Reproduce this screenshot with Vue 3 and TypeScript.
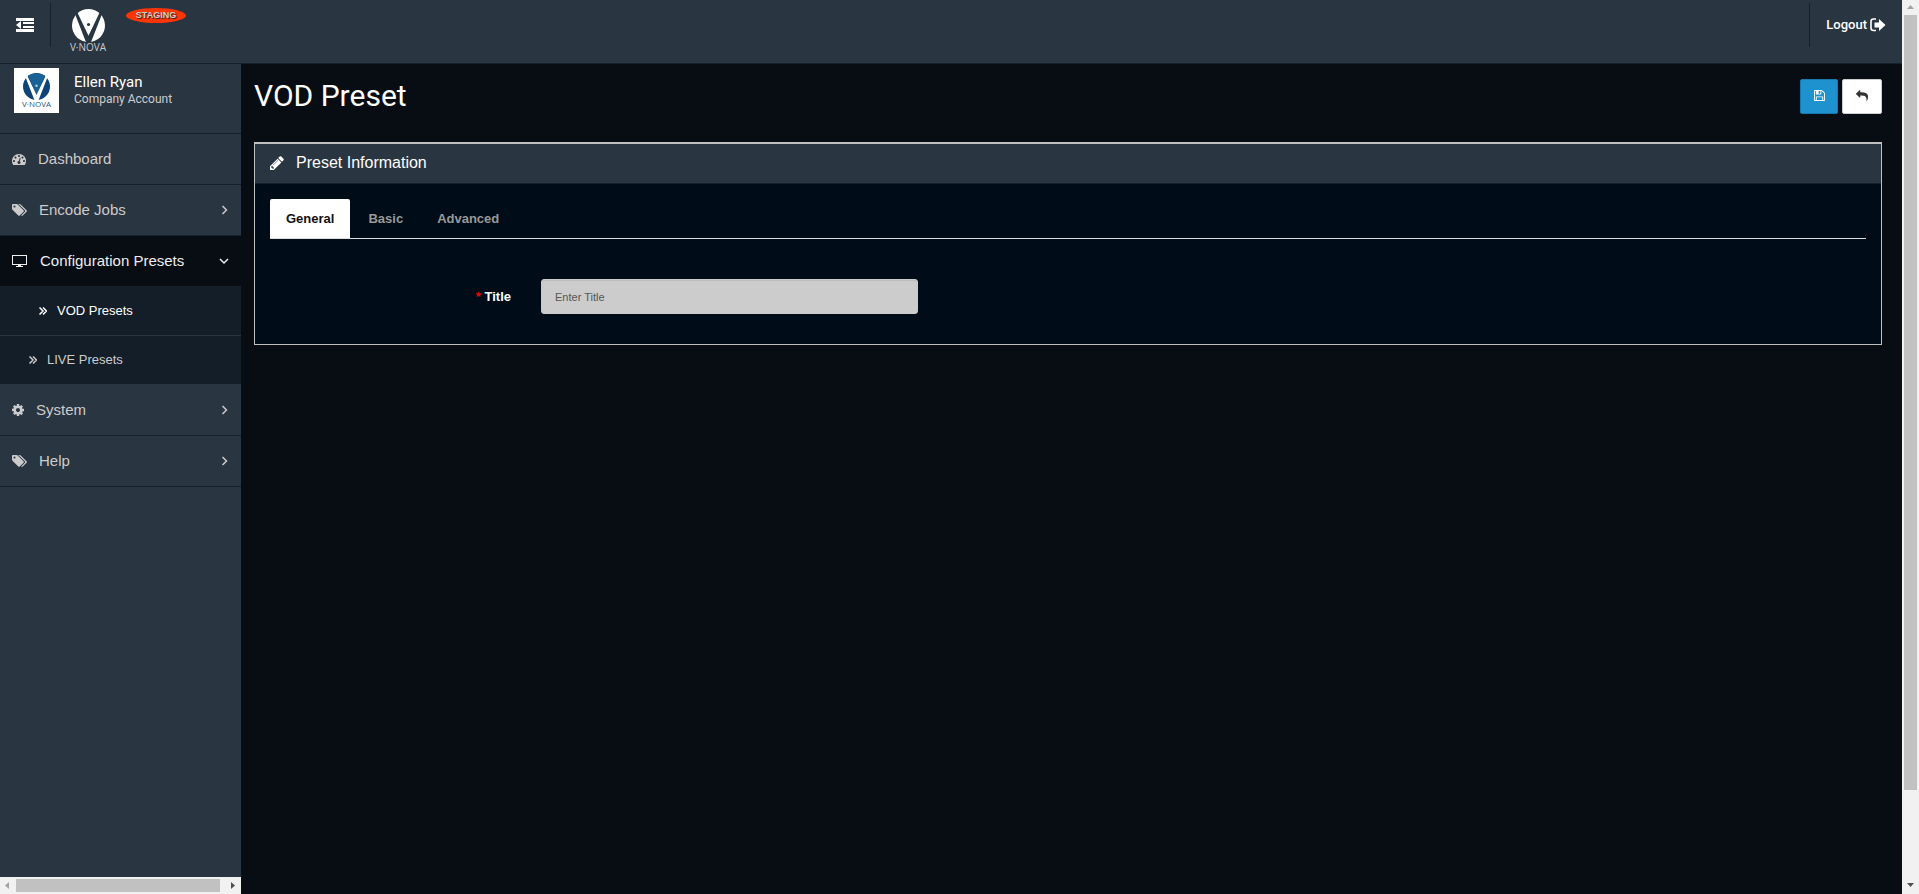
<script setup lang="ts">
import { ref } from 'vue'

interface MenuItem {
  label: string
  icon: 'tachometer' | 'tags' | 'desktop' | 'cog'
  arrow?: 'right' | 'down'
  children?: { label: string; active: boolean }[]
}

const icons: Record<string, { box: string; d: string }> = {
  tachometer: {
    box: '0 0 1792 1792',
    d: 'M384 1152q0-53-37.5-90.5t-90.5-37.5-90.5 37.5-37.5 90.5 37.5 90.5 90.5 37.5 90.5-37.5 37.5-90.5zm192-448q0-53-37.5-90.5t-90.5-37.5-90.5 37.5-37.5 90.5 37.5 90.5 90.5 37.5 90.5-37.5 37.5-90.5zm428 481l101-382q6-26-7.5-48.5t-38.5-29.5-48 6.5-30 39.5l-101 382q-60 5-107 43.5t-63 98.5q-20 77 20 146t117 89 146-20 89-117q16-60-6-117t-72-91zm660-33q0-53-37.5-90.5t-90.5-37.5-90.5 37.5-37.5 90.5 37.5 90.5 90.5 37.5 90.5-37.5 37.5-90.5zm-640-640q0-53-37.5-90.5t-90.5-37.5-90.5 37.5-37.5 90.5 37.5 90.5 90.5 37.5 90.5-37.5 37.5-90.5zm448 192q0-53-37.5-90.5t-90.5-37.5-90.5 37.5-37.5 90.5 37.5 90.5 90.5 37.5 90.5-37.5 37.5-90.5zm320 448q0 261-141 483-19 29-54 29h-1402q-35 0-54-29-141-221-141-483 0-182 71-348t191-286 286-191 348-71 348 71 286 191 191 286 71 348z',
  },
  tags: {
    box: '0 0 1920 1792',
    d: 'M448 448q0-53-37.5-90.5t-90.5-37.5-90.5 37.5-37.5 90.5 37.5 90.5 90.5 37.5 90.5-37.5 37.5-90.5zm1067 576q0 53-37 90l-491 492q-39 37-91 37-53 0-90-37l-715-716q-38-37-64.5-101t-26.5-117v-416q0-52 38-90t90-38h416q53 0 117 26.5t102 64.5l715 714q37 39 37 91zm384 0q0 53-37 90l-491 492q-39 37-91 37-36 0-59-14t-53-45l470-470q37-37 37-90 0-52-37-91l-715-714q-38-38-102-64.5t-117-26.5h224q53 0 117 26.5t102 64.5l715 714q37 39 37 91z',
  },
  desktop: {
    box: '0 0 15 14',
    d: 'M0 1h15v10H9v1h2v1H4v-1h2v-1H0zM1 2v8h13V2z',
  },
  cog: {
    box: '128 0 1536 1792',
    d: 'M1152 896q0-106-75-181t-181-75-181 75-75 181 75 181 181 75 181-75 75-181zm512-109v222q0 12-8 23t-20 13l-185 28q-19 54-39 91 35 50 107 138 10 12 10 25t-9 23q-27 37-99 108t-94 71q-12 0-26-9l-138-108q-44 23-91 38-16 136-29 186-7 28-36 28h-222q-14 0-24.5-8.5t-11.5-21.5l-28-184q-49-16-90-37l-141 107q-10 9-25 9-14 0-25-11-126-114-165-168-7-10-7-23 0-12 8-23 15-21 51-66.5t54-70.5q-27-50-41-99l-183-27q-13-2-21-12.5t-8-23.5v-222q0-12 8-23t19-13l186-28q14-46 39-92-40-57-107-138-10-12-10-24 0-10 9-23 26-36 98.5-107.5t94.5-71.5q13 0 26 10l138 107q44-23 91-38 16-136 29-186 7-28 36-28h222q14 0 24.5 8.5t11.5 21.5l28 184q49 16 90 37l142-107q9-9 24-9 13 0 25 10 129 119 165 170 7 8 7 22 0 12-8 23-15 21-51 66.5t-54 70.5q26 50 41 98l183 28q13 2 21 12.5t8 23.5z',
  },
}

const menu: MenuItem[] = [
  { label: 'Dashboard', icon: 'tachometer' },
  { label: 'Encode Jobs', icon: 'tags', arrow: 'right' },
  {
    label: 'Configuration Presets',
    icon: 'desktop',
    arrow: 'down',
    children: [
      { label: 'VOD Presets', active: true },
      { label: 'LIVE Presets', active: false },
    ],
  },
  { label: 'System', icon: 'cog', arrow: 'right' },
  { label: 'Help', icon: 'tags', arrow: 'right' },
]

const tabs = ['General', 'Basic', 'Advanced']
const activeTab = ref('General')
const title = ref('')
</script>

<template>
  <div class="window">
    <div class="page">
      <header class="topbar">
        <button class="toggle" type="button" aria-label="Toggle menu">
          <svg width="18" height="14" viewBox="0 0 18 14" fill="#fff">
            <path d="M0 0h18v3H0zM7 4h11v2H7zM7 8h11v2H7zM0 11h18v3H0zM5 3v8L0 7z" />
          </svg>
        </button>
        <a class="brand" href="#" aria-label="V-Nova home">
          <svg width="33" height="33" viewBox="0 0 32 32">
            <circle cx="16" cy="16" r="16" fill="#fff" />
            <path d="M3 5L13.500 32h5L29 5l-2-2L16 26 5 3z" fill="#2a3542" />
            <circle cx="16" cy="15" r="1.500" fill="#2a3542" />
          </svg>
          <span class="brand-name">V·NOVA</span>
        </a>
        <span class="badge">STAGING</span>
        <a class="logout" href="#">
          Logout
          <svg width="16" height="14" viewBox="0 0 16 14">
            <path d="M6 1H3.500Q1 1 1 3.500v6.500Q1 12.500 3.500 12.500H6" fill="none" stroke="#fff" stroke-width="1.600" />
            <path d="M4.500 4.500H9V1l6.500 6L9 13V9.500H4.500z" fill="#fff" />
          </svg>
        </a>
      </header>

      <div class="columns">
        <aside class="sidebar">
          <div class="user">
            <div class="avatar">
              <svg width="27" height="27" viewBox="0 0 32 32">
                <circle cx="16" cy="16" r="16" fill="#0e4377" />
                <path d="M6 3l10 23L26 3q-10-5-20 0z" fill="#1a6196" />
                <path d="M3 5L13.500 32h5L29 5l-2-2L16 26 5 3z" fill="#fff" />
                <circle cx="16" cy="15" r="1.500" fill="#9fd0e8" />
              </svg>
              <span class="avatar-name">V·NOVA</span>
            </div>
            <div class="who">
              <span class="name">Ellen Ryan</span>
              <span class="role">Company Account</span>
            </div>
          </div>
          <nav>
            <ul class="menu">
              <li v-for="item in menu" :key="item.label">
                <a href="#" class="entry" :class="{ open: item.children }">
                  <svg class="glyph" :class="item.icon" :viewBox="icons[item.icon].box">
                    <path :d="icons[item.icon].d" fill="currentColor" fill-rule="evenodd" />
                  </svg>
                  <span>{{ item.label }}</span>
                  <svg v-if="item.arrow" class="arrow" width="10" height="10" viewBox="0 0 10 10">
                    <path
                      :d="item.arrow === 'right' ? 'M3.500 1l4 4-4 4' : 'M1 3l4 4 4-4'"
                      fill="none"
                      stroke="currentColor"
                      stroke-width="1.500"
                    />
                  </svg>
                </a>
                <ul v-if="item.children" class="submenu">
                  <li v-for="child in item.children" :key="child.label">
                    <a href="#" class="sub" :class="{ active: child.active }">
                      <svg width="8" height="8" viewBox="0 0 8 8">
                        <path d="M.5.5L4 4 .5 7.500M4 .5L7.500 4 4 7.500" fill="none" stroke="currentColor" stroke-width="1.500" />
                      </svg>
                      <span>{{ child.label }}</span>
                    </a>
                  </li>
                </ul>
              </li>
            </ul>
          </nav>
          <div class="hbar" aria-hidden="true">
            <svg width="16" height="17" viewBox="0 0 16 17"><path d="M9 5v7L5 8.500z" fill="#a3a3a3" /></svg>
            <div class="hthumb"></div>
            <svg width="21" height="17" viewBox="0 0 21 17"><path d="M11 5v7l4-3.500z" fill="#505050" /></svg>
          </div>
        </aside>

        <main class="content">
          <div class="heading">
            <h1>VOD Preset</h1>
            <div class="actions">
              <button class="save" type="button" aria-label="Save">
                <svg width="11" height="11" viewBox="128 128 1536 1536">
                  <path
                    fill="#fff"
                    d="M512 1536h768v-384h-768v384zm896 0h128v-896q0-14-10-38.5t-20-34.5l-281-281q-10-10-34-20t-39-10v416q0 40-28 68t-68 28h-576q-40 0-68-28t-28-68v-416h-128v1280h128v-416q0-40 28-68t68-28h832q40 0 68 28t28 68v416zm-384-928v-320q0-13-9.5-22.5t-22.5-9.5h-192q-13 0-22.5 9.5t-9.5 22.5v320q0 13 9.5 22.5t22.5 9.5h192q13 0 22.5-9.5t9.5-22.5zm640 32v928q0 40-28 68t-68 28h-1344q-40 0-68-28t-28-68v-1344q0-40 28-68t68-28h928q40 0 88 20t76 48l280 280q28 28 48 76t20 88z"
                  />
                </svg>
              </button>
              <button class="back" type="button" aria-label="Back">
                <svg width="12" height="12" viewBox="0 0 1792 1792">
                  <path
                    fill="#333"
                    d="M1792 1120q0 166-127 451-3 7-10.5 24t-13.5 30-13 22q-12 17-28 17-15 0-23.5-10t-8.5-25q0-9 2.5-26.5t2.5-23.5q5-68 5-123 0-112-19.5-200.5t-54-153.5-89-112-113-80-133-46-145.5-21.5-158.5-7.5h-224v256q0 26-19 45t-45 19-45-19l-512-512q-19-19-19-45t19-45l512-512q19-19 45-19t45 19 19 45v256h224q713 0 875 403 53 134 53 333z"
                  />
                </svg>
              </button>
            </div>
          </div>

          <section class="panel">
            <h2 class="panel-head">
              <svg width="14" height="14" viewBox="128 128 1536 1536">
                <path
                  fill="#fff"
                  d="M491 1536l91-91-235-235-91 91v107h128v128h107zm523-928q0-22-22-22-10 0-17 7l-542 542q-7 7-7 17 0 22 22 22 10 0 17-7l542-542q7-7 7-17zm-54-192l416 416-832 832h-416v-416zm683 96q0 53-37 90l-166 166-416-416 166-165q36-38 90-38 53 0 91 38l235 234q37 39 37 91z"
                />
              </svg>
              Preset Information
            </h2>
            <div class="tabs" role="tablist">
              <button
                v-for="tab in tabs"
                :key="tab"
                type="button"
                role="tab"
                class="tab"
                :class="{ active: tab === activeTab }"
                :aria-selected="tab === activeTab"
                @click="activeTab = tab"
              >
                {{ tab }}
              </button>
            </div>
            <form class="fields" @submit.prevent>
              <label for="preset-title"><span class="required">*</span> Title</label>
              <div class="control">
                <input id="preset-title" v-model="title" type="text" placeholder="Enter Title" />
              </div>
            </form>
          </section>
        </main>
      </div>
    </div>
    <div class="vbar" aria-hidden="true">
      <svg width="17" height="15" viewBox="0 0 17 15"><path d="M5 9h7L8.500 5z" fill="#a3a3a3" /></svg>
      <div class="vthumb"></div>
      <svg width="17" height="17" viewBox="0 0 17 17"><path d="M5 6h7l-3.500 4z" fill="#505050" /></svg>
    </div>
  </div>
</template>

<style>
body {
  margin: 0;
  background: #080c13;
}
</style>

<style scoped>
* {
  box-sizing: border-box;
}
.window {
  display: flex;
  height: 100vh;
  font: 13px/18px 'Liberation Sans', Arial, sans-serif;
  color: #fff;
}
a {
  color: inherit;
  text-decoration: none;
}
button {
  font: inherit;
  padding: 0;
  border: 0;
  cursor: pointer;
}
svg {
  display: block;
  flex: none;
}
ul {
  list-style: none;
  margin: 0;
  padding: 0;
}
.page {
  flex: 1;
  min-width: 0;
  display: flex;
  flex-direction: column;
}
.topbar {
  display: flex;
  align-items: flex-start;
  height: 64px;
  background: #2a3542;
  border-bottom: 1px solid #17212c;
}
.toggle {
  display: flex;
  align-items: center;
  justify-content: center;
  width: 51px;
  height: 44px;
  margin-top: 3px;
  padding-right: 1px;
  background: none;
  border-right: 1px solid #17212c;
}
.brand {
  display: flex;
  flex-direction: column;
  align-items: center;
  width: 38px;
  margin: 9px 0 0 18px;
}
.brand-name {
  font: 10px/10px 'Open Sans', sans-serif;
  color: #c8ccd0;
}
.badge {
  margin: 8px 0 0 19px;
  width: 60px;
  border-radius: 50%;
  background: #ff3503;
  color: #ccc;
  font-size: 9px;
  font-weight: bold;
  line-height: 15px;
  text-align: center;
  text-shadow: 1px 1px 1px #222;
}
.logout {
  display: flex;
  align-items: center;
  gap: 3px;
  height: 44px;
  margin: 3px 0 0 auto;
  padding: 0 16px;
  border-left: 1px solid #17212c;
  font-family: Roboto, sans-serif;
  font-weight: 500;
}
.columns {
  flex: 1;
  min-height: 0;
  display: flex;
}
.sidebar {
  width: 241px;
  flex: none;
  display: flex;
  flex-direction: column;
  background: #2a3542;
}
.user {
  display: flex;
  gap: 15px;
  height: 69px;
  padding: 4px 14px 0;
}
.avatar {
  display: flex;
  flex-direction: column;
  align-items: center;
  width: 45px;
  height: 45px;
  padding-top: 5px;
  background: #fff;
}
.avatar-name {
  font: 8px/8px 'Open Sans', sans-serif;
  color: #2f5680;
}
.who {
  display: flex;
  flex-direction: column;
  padding-top: 5px;
  font-family: Roboto, sans-serif;
}
.name {
  font-size: 15px;
  line-height: 18px;
}
.role {
  font-size: 12px;
  line-height: 16px;
  color: #ccc;
}
.menu {
  border-top: 1px solid #17212c;
}
.entry {
  display: flex;
  align-items: center;
  gap: 12px;
  height: 51px;
  padding: 0 12px;
  border-bottom: 1px solid #17212c;
  font-size: 15px;
  color: #ccc;
}
.entry.open {
  gap: 13px;
  background: #080c13;
  color: #eee;
}
.glyph {
  width: 15px;
  height: 14px;
}
.glyph.tachometer {
  width: 14px;
}
.glyph.cog {
  width: 12px;
}
.arrow {
  margin-left: auto;
}
.submenu {
  background: #131e29;
}
.submenu li {
  border-bottom: 1px solid #2a3542;
}
.sub {
  display: flex;
  align-items: center;
  gap: 10px;
  height: 48px;
  padding-left: 29px;
  color: #ccc;
}
.sub.active {
  padding-left: 39px;
  color: #fff;
}
.hbar {
  display: flex;
  align-items: center;
  height: 17px;
  margin-top: auto;
  background: #f1f1f1;
}
.hthumb {
  flex: 1;
  height: 13px;
  background: #c1c1c1;
}
.content {
  flex: 1;
  min-width: 0;
  padding: 15px 20px 0 13px;
}
.heading {
  display: flex;
  justify-content: space-between;
  height: 63px;
}
h1 {
  margin: 0;
  font: 400 30px/34px Roboto, sans-serif;
}
.actions {
  display: flex;
  gap: 4px;
}
.actions button {
  display: flex;
  align-items: center;
  justify-content: center;
  height: 35px;
  border-radius: 2px;
}
.actions .save {
  width: 38px;
  padding-bottom: 2px;
  background: #1e91cf;
  border: 1px solid #1978ab;
}
.actions .back {
  width: 40px;
  padding-bottom: 2px;
  background: #fff;
  border: 1px solid #ccc;
}
.panel {
  border: 1px solid #bfbfbf;
  border-top-width: 2px;
  background: #000c17;
}
.panel-head {
  display: flex;
  align-items: center;
  gap: 12px;
  height: 40px;
  margin: 0;
  padding: 0 15px 2px;
  background: #2a3542;
  border-bottom: 1px solid #17212c;
  font-size: 16px;
  font-weight: 400;
}
.tabs {
  display: flex;
  gap: 2px;
  margin: 15px 15px 0;
  border-bottom: 1px solid #ddd;
}
.tab {
  height: 39px;
  padding: 0 16px;
  background: none;
  border-radius: 2px 2px 0 0;
  color: #999;
  font-weight: bold;
}
.tab.active {
  background: #fff;
  color: #111;
}
.fields {
  display: grid;
  grid-template-columns: 2fr 3fr 7fr;
  align-items: center;
  padding: 40px 0 30px;
}
.fields label {
  padding-right: 15px;
  text-align: right;
  font-weight: bold;
}
.required {
  color: #f00;
}
.control {
  padding: 0 15px;
}
input {
  display: block;
  width: 100%;
  height: 35px;
  padding: 0 13px;
  border: 1px solid #ccc;
  border-radius: 3px;
  background: #ccc;
  box-shadow: inset 0 1px 1px rgba(0, 0, 0, 0.08);
  font: 11px/16px 'Liberation Sans', Arial, sans-serif;
  color: #333;
}
input::placeholder {
  color: #555;
  opacity: 1;
}
.vbar {
  width: 17px;
  display: flex;
  flex-direction: column;
  align-items: center;
  background: #f1f1f1;
}
.vthumb {
  flex: none;
  width: 13px;
  height: calc(100% - 119px);
  background: #c1c1c1;
}
.vbar svg:last-child {
  margin-top: auto;
}
</style>
